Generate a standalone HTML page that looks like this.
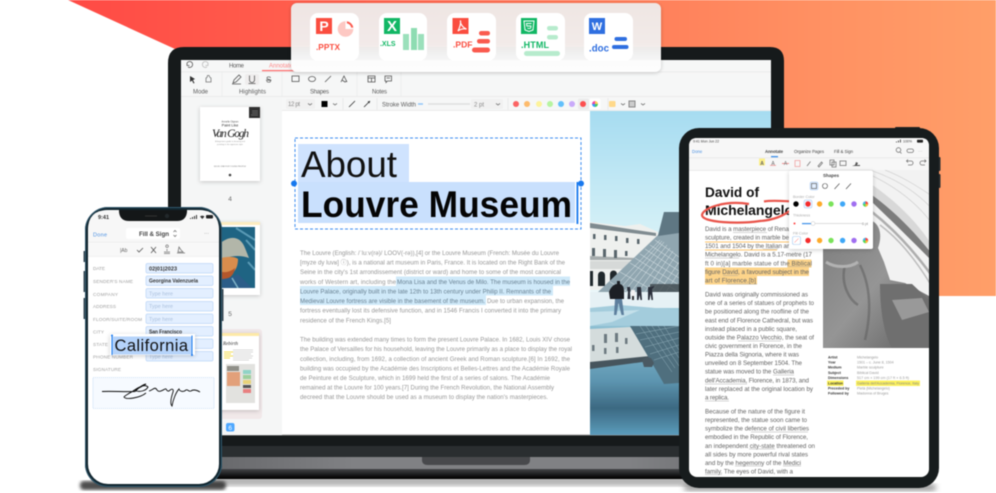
<!DOCTYPE html>
<html><head><meta charset="utf-8"><style>
html,body{margin:0;padding:0;background:#fff;width:996px;height:493px;overflow:hidden}
svg{display:block;filter:blur(.4px)}
text{font-family:"Liberation Sans","DejaVu Sans",sans-serif}
.b{font-size:6.1px;fill:#979797}
.bs{font-size:6.1px;fill:#6a8293}
.i{font-size:6.2px;fill:#646464}
.tb{font-size:6px;fill:#5c5c5c}
.l{font-size:5.6px;fill:#a0a0a0}
.t{font-size:3.6px;font-weight:bold;fill:#333}
.v{font-size:3.6px;fill:#999}
.ic{fill:none;stroke:#555;stroke-width:.8}
.ii{fill:none;stroke:#777;stroke-width:.8}
</style></head><body>
<svg width="996" height="493" viewBox="0 0 996 493" xmlns="http://www.w3.org/2000/svg">
<defs>
<linearGradient id="bg" x1="68" x2="996" y1="0" y2="0" gradientUnits="userSpaceOnUse"><stop offset="0" stop-color="#ff4a45"/><stop offset=".35" stop-color="#ff6650"/><stop offset=".8" stop-color="#ff9062"/><stop offset="1" stop-color="#ff9f69"/></linearGradient>
<linearGradient id="sky" x1="0" x2="0" y1="0" y2="1"><stop offset="0" stop-color="#a6dcf1"/><stop offset=".55" stop-color="#cfeef6"/><stop offset="1" stop-color="#eef9fb"/></linearGradient>
<linearGradient id="wat" x1="0" x2="0" y1="0" y2="1"><stop offset="0" stop-color="#a4cedd"/><stop offset=".3" stop-color="#7fb6cb"/><stop offset=".6" stop-color="#5d95b0"/><stop offset=".8" stop-color="#3c6982"/><stop offset="1" stop-color="#5b9cbb"/></linearGradient>
<linearGradient id="chin" x1="0" x2="1" y1="0" y2="0"><stop offset="0" stop-color="#5f6063"/><stop offset=".3" stop-color="#808184"/><stop offset=".75" stop-color="#808184"/><stop offset="1" stop-color="#646568"/></linearGradient>
<linearGradient id="chin2" x1="0" x2="0" y1="0" y2="1"><stop offset="0" stop-color="#444548"/><stop offset=".7" stop-color="#101112"/><stop offset="1" stop-color="#000"/></linearGradient>
<linearGradient id="pan" x1="0" x2="0" y1="0" y2="1"><stop offset="0" stop-color="#efeae8"/><stop offset=".6" stop-color="#f2efee"/><stop offset=".8" stop-color="#fcfcfc"/><stop offset="1" stop-color="#fff"/></linearGradient>
<linearGradient id="stat" x1="0" x2="1" y1="0" y2="1"><stop offset="0" stop-color="#7c7c7c"/><stop offset=".5" stop-color="#959595"/><stop offset="1" stop-color="#5f5f5f"/></linearGradient>
<filter id="bl"><feGaussianBlur stdDeviation="3"/></filter>
<filter id="bl2"><feGaussianBlur stdDeviation="1.5"/></filter>
<filter id="sh" x="-20%" y="-20%" width="140%" height="140%"><feDropShadow dx="0" dy="1" stdDeviation="2" flood-color="#000" flood-opacity=".2"/></filter>
<clipPath id="ph"><rect x="590" y="111" width="181" height="324"/></clipPath>
<clipPath id="stc"><rect x="823" y="170" width="106" height="178"/></clipPath>
<clipPath id="vg"><rect x="203" y="227" width="52" height="61"/></clipPath>
</defs>

<polygon points="68,0 996,0 996,296 600,296 175,49" fill="url(#bg)"/>

<!-- LAPTOP -->
<rect x="172" y="476" width="600" height="10" fill="#555" opacity=".45" filter="url(#bl)"/>
<path d="M184 47H770Q784 47 784 61V436H168V63Q168 47 184 47Z" fill="#161a1b"/>
<rect x="168" y="435" width="616" height="11" fill="#161a1b"/>
<rect x="168" y="446" width="616" height="11" fill="#2a2e30"/>
<rect x="168" y="457" width="616" height="12" fill="url(#chin)"/>
<rect x="168" y="469" width="616" height="10" fill="url(#chin2)"/>
<path d="M422 457H530V460Q530 465 524 465H428Q422 465 422 460Z" fill="#48494c"/>
<rect x="181" y="60" width="590" height="375" fill="#fff"/>
<rect x="181" y="434.500" width="590" height="1" fill="#999"/>
<rect x="181" y="60" width="590" height="51" fill="#f6f7f7"/>
<rect x="181" y="71.500" width="590" height=".8" fill="#e8e8e8"/>
<rect x="181" y="96" width="590" height="1" fill="#ebebeb"/>
<rect x="282" y="110" width="489" height=".8" fill="#eaeaea"/>
<rect x="181" y="97" width="101" height="338" fill="#f5f6f6"/>

<!-- tabs -->
<path d="M187 63a3 3 0 1 1 1 4M187 63v2.500h2.500" class="ic"/>
<path d="M208 63a3 3 0 1 0 -1 4M208 63v2.500h-2.500" fill="none" stroke="#bbb" stroke-width=".8"/>
<text x="229" y="67.500" class="tb" textLength="15">Home</text>
<text x="269" y="67.500" class="tb" style="fill:#f88" textLength="24">Annotate</text>
<rect x="262" y="70" width="38" height="1.200" fill="#ff6a6a"/>
<!-- ribbon -->
<g stroke="#ececec" stroke-width=".8"><path d="M222 72V96M282 72V96M357 72V96M401 72V96"/></g>
<path d="M190 76l5 3-2 1 1.500 3-1 .5-1.500-3-2 1.500z" fill="#333"/>
<path d="M206 82v-4l1-.5.500-2 1.500 0 1 2 1 .5v4z" class="ii"/>
<path d="M233 83l1-3 5-5 2 2-5 5zM232 84h9" class="ic"/>
<rect x="245" y="74" width="14" height="11" rx="2" fill="#efeded"/>
<path d="M249.500 75.500v4.500a2.500 2.500 0 0 0 5 0v-4.500M248.500 83.500h7" class="ic"/>
<text x="266" y="82.500" style="font-size:8px;fill:#555" text-decoration="line-through">S</text>
<rect x="292" y="76" width="7" height="5.500" class="ic"/>
<ellipse cx="312" cy="79" rx="3.500" ry="2.500" class="ic"/>
<path d="M325 82l6-6" class="ic"/>
<path d="M341 82l3-6 3 6M342 80l3 2 2-1" class="ic"/>
<path d="M368 76h7v6h-7zM368 78h7M371.500 78v4" class="ic"/>
<path d="M385 76h6.500v5h-4l-1.500 1.500v-1.500h-1zM386.500 78h3.500" class="ic"/>
<g class="tb"><text x="193" y="93.500" textLength="15">Mode</text><text x="239" y="93.500" textLength="27">Highlights</text><text x="310" y="93.500" textLength="19">Shapes</text><text x="372" y="93.500" textLength="15">Notes</text></g>
<!-- format bar -->
<rect x="286" y="99" width="29" height="10" rx="2" fill="#f1f1f1"/>
<text x="288" y="106" class="tb" style="fill:#888" textLength="12">12 pt</text>
<path d="M308 103.500l2 1.500 2-1.500" class="ii"/>
<rect x="321.500" y="101" width="6" height="6" fill="#000"/>
<path d="M333 103.500l2 1.500 2-1.500" class="ii"/>
<path d="M343 98V110M377 98V110M508 98V110M608 98V110" stroke="#e6e6e6" stroke-width=".8"/>
<path d="M349 107l6-6M364 107l6-6" stroke="#333" stroke-width=".8"/>
<path d="M370 101l-2.500.5 2 2z" fill="#333"/>
<text x="382" y="106.500" class="tb" textLength="34">Stroke Width</text>
<rect x="418" y="103.300" width="5" height="1.400" fill="#8cc4fa"/>
<rect x="428" y="103.300" width="42" height="1.400" fill="#ddd"/>
<rect x="471" y="99" width="32" height="10" rx="2" fill="#f1f1f1"/>
<text x="474" y="106.500" class="tb" style="fill:#888" textLength="10">2 pt</text>
<path d="M496 103.500l2 1.500 2-1.500" class="ii"/>
<rect x="578" y="98.500" width="11" height="11" rx="2" fill="#ececec"/>
<rect x="589.500" y="98.500" width="11" height="11" rx="2" fill="#fff"/>
<g><circle cx="516" cy="104" r="3" fill="#fb6464"/><circle cx="527" cy="104" r="3" fill="#fdbb6c"/><circle cx="539" cy="104" r="3" fill="#fdf39b"/><circle cx="550" cy="104" r="3" fill="#b7f4a0"/><circle cx="561" cy="104" r="3" fill="#62c0fb"/><circle cx="572" cy="104" r="3" fill="#c9aafa"/><circle cx="583" cy="104" r="3" fill="#fc5050"/>
<path d="M595 104V101A3 3 0 0 1 598 104Z" fill="#fc5"/><path d="M595 104H598A3 3 0 0 1 595 107Z" fill="#4c6"/><path d="M595 104V107A3 3 0 0 1 592 104Z" fill="#39f"/><path d="M595 104H592A3 3 0 0 1 595 101Z" fill="#e4a"/></g>
<rect x="609" y="101" width="6.500" height="6" rx="1" fill="#ffd98a"/>
<path d="M621 103.500l2 1.500 2-1.500M641 103.500l2 1.500 2-1.500" class="ii"/>
<rect x="629" y="101" width="6" height="6" fill="#ccc" stroke="#888" stroke-width="1"/>

<!-- thumbnails -->
<rect x="200" y="107" width="60" height="74" fill="#fff" filter="url(#sh)"/>
<rect x="249" y="107" width="11" height="11" fill="#2f2f2f"/>
<path d="M252 111h6M252 113h6M251 115h7" stroke="#999" stroke-width=".6"/>
<text x="230" y="122.500" style="font-size:2.500px;fill:#555" text-anchor="middle">Annelle Oignon</text>
<text x="230" y="126.500" style="font-size:3.800px;fill:#333" text-anchor="middle">Paint Like</text>
<text x="212" y="137" style="font-family:'Liberation Serif',serif;font-style:italic;font-size:11.500px;fill:#222" textLength="37">Van Gogh</text>
<text x="230" y="142" style="font-size:2px;fill:#999" text-anchor="middle">A beginners guide to drawing and</text>
<text x="230" y="145" style="font-size:2px;fill:#999" text-anchor="middle">painting in his signature style</text>
<text x="230" y="167" style="font-size:2px;fill:#777" text-anchor="middle">BOOK ONE FOR YOUNG PEOPLE</text>
<circle cx="230" cy="175" r="1.300" fill="#444"/>
<text x="230" y="201" style="font-size:6.500px;fill:#666" text-anchor="middle">4</text>

<rect x="198" y="222" width="62" height="73" fill="#fff" filter="url(#sh)"/>
<rect x="198" y="222" width="62" height="3" fill="#fdecc0"/>
<g clip-path="url(#vg)">
<rect x="203" y="227" width="52" height="61" fill="#1f6483"/>
<path d="M236 228L255 240M246 240L255 250M248 262L255 270" stroke="#5a9ab5" stroke-width="2"/>
<path d="M210 262C214 240 238 228 245 248L249 258C238 254 226 256 212 264Z" fill="#b2b6a9"/>
<path d="M216 260C224 256 235 256 238 259C238 270 232 276 222 277H216Z" fill="#d88d4d"/>
<path d="M216 270C224 274 230 272 235 268C234 276 228 281 216 281Z" fill="#b4572b"/>
<path d="M203 277C215 281 228 280 238 274L252 288H203Z" fill="#2c5d88"/>
<path d="M232 278L238 288" stroke="#7fb3c7" stroke-width="1.500"/>
</g>
<text x="230" y="316" style="font-size:6.500px;fill:#666" text-anchor="middle">5</text>

<rect x="196" y="329" width="66" height="90" rx="3" fill="#f1e8e9"/>
<rect x="198" y="333" width="61" height="77" fill="#fff" filter="url(#sh)"/>
<rect x="198" y="333" width="61" height="3" fill="#fde9a8"/>
<text x="223" y="345" style="font-family:'Liberation Serif',serif;font-style:italic;font-size:5px;fill:#333">Rebirth</text>
<path d="M224 352h9M224 354h7M224 356h9M224 358h6" stroke="#f2dd55" stroke-width="1"/>
<path d="M233 350h20M233 352h20M233 354h18M233 356h20M233 358h19M233 360h16" stroke="#ccc" stroke-width=".7"/>
<rect x="226" y="364" width="29" height="39" fill="#e2e2df"/>
<rect x="227" y="372" width="13" height="14" fill="#e2a07a"/>
<rect x="227" y="366" width="12" height="5" fill="#8f8f88"/>
<rect x="243" y="370" width="8" height="4" fill="#8fd3c6"/><rect x="243" y="375" width="8" height="4" fill="#9ccf9c"/><rect x="243" y="380" width="8" height="4" fill="#e8d37a"/><rect x="243" y="385" width="8" height="3" fill="#555"/><rect x="243" y="389" width="8" height="4" fill="#e88080"/>
<rect x="226" y="423" width="8.500" height="8.500" rx="2" fill="#4ea8ff"/>
<text x="230.200" y="430" style="font-size:6.500px;fill:#fff" text-anchor="middle">6</text>

<!-- doc title -->
<rect x="298" y="144" width="111" height="42" fill="#cfe3fe"/>
<rect x="298" y="182" width="277" height="41" fill="#c9e0fd"/>
<rect x="295" y="138" width="286" height="91" fill="none" stroke="#3d8df0" stroke-width="1" stroke-dasharray="3 2"/>
<text x="301" y="177" style="font-size:37px;fill:#111" textLength="96" lengthAdjust="spacingAndGlyphs">About</text>
<text x="301" y="217" style="font-size:37px;font-weight:bold;fill:#050505" textLength="271" lengthAdjust="spacingAndGlyphs">Louvre Museum</text>
<circle cx="294" cy="183.500" r="3" fill="#1778ee"/>
<circle cx="581" cy="183.500" r="3" fill="#1778ee"/>
<rect x="576.500" y="182" width="1.800" height="42" fill="#1778ee"/>

<!-- doc body -->
<path d="M396 276.500H570V285.800H553V295.500H486V305H300V286H396Z" fill="#cfe9f9"/>
<g class="b">
<text x="300" y="255" textLength="259">The Louvre (English: /ˈluːv(rə)/ LOOV(-rə)),[4] or the Louvre Museum (French: Musée du Louvre</text>
<text x="300" y="264.500" textLength="265">[myze dy luvʁ] ⓘ), is a national art museum in Paris, France. It is located on the Right Bank of the</text>
<text x="300" y="274.200" textLength="261">Seine in the city's 1st arrondissement (district or ward) and home to some of the most canonical</text>
<text x="300" y="283.800" textLength="96">works of Western art, including the</text>
<text x="487" y="303" textLength="77">Due to urban expansion, the</text>
<text x="300" y="312.700" textLength="261">fortress eventually lost its defensive function, and in 1546 Francis I converted it into the primary</text>
<text x="300" y="322.300" textLength="91">residence of the French Kings.[5]</text>
<text x="300" y="341.500" textLength="270">The building was extended many times to form the present Louvre Palace. In 1682, Louis XIV chose</text>
<text x="300" y="351.200" textLength="272">the Palace of Versailles for his household, leaving the Louvre primarily as a place to display the royal</text>
<text x="300" y="360.800" textLength="270">collection, including, from 1692, a collection of ancient Greek and Roman sculpture.[6] In 1692, the</text>
<text x="300" y="370.400" textLength="270">building was occupied by the Académie des Inscriptions et Belles-Lettres and the Académie Royale</text>
<text x="300" y="380" textLength="250">de Peinture et de Sculpture, which in 1699 held the first of a series of salons. The Académie</text>
<text x="300" y="389.600" textLength="254">remained at the Louvre for 100 years.[7] During the French Revolution, the National Assembly</text>
<text x="300" y="399.200" textLength="248">decreed that the Louvre should be used as a museum to display the nation's masterpieces.</text>
</g>
<g class="bs">
<text x="397" y="283.800" textLength="173">Mona Lisa and the Venus de Milo. The museum is housed in the</text>
<text x="300" y="293.400" textLength="251">Louvre Palace, originally built in the late 12th to 13th century under Philip II. Remnants of the</text>
<text x="300" y="303" textLength="185">Medieval Louvre fortress are visible in the basement of the museum.</text>
</g>

<!-- photo -->
<g clip-path="url(#ph)">
<rect x="590" y="111" width="181" height="190" fill="url(#sky)"/>
<rect x="590" y="300" width="181" height="135" fill="url(#wat)"/>
<!-- building -->
<path d="M590 222L625 226L640 224L658 232V240L625 290H590Z" fill="#eef0ee"/>
<path d="M590 223L656 233V236L590 228Z" fill="#7f8b90"/>
<path d="M590 256L636 258V260H590Z" fill="#a6acad"/>
<g fill="#59666c"><rect x="593" y="234" width="2.500" height="5"/><rect x="604" y="235" width="2.500" height="5"/><rect x="615" y="236" width="2.500" height="5"/><rect x="626" y="238" width="2.500" height="5"/><rect x="637" y="239" width="2.500" height="5"/>
<rect x="592" y="248" width="3" height="8"/><rect x="603" y="249" width="3" height="8"/><rect x="614" y="250" width="3" height="8"/><rect x="625" y="251" width="2.500" height="5"/></g>
<g fill="#20282c"><path d="M590 271h3v15h-3zM598 286v-11a3.500 3.500 0 0 1 7 0v11zM610 283v-9a3.500 3.500 0 0 1 7 0v5z"/></g>
<rect x="590" y="261" width="46" height="8" fill="#d6d9d8"/>
<!-- pyramid -->
<path d="M598 292L658 235L664 212H679V292Z" fill="#90a6b0"/>
<path d="M664 212H679V233L658 236Z" fill="#5f7783"/>
<g stroke="#dfe9ec" stroke-width=".5" fill="none"><path d="M610 292L660 240M617 292L662 241M624 292L664 242M631 292L667 245M638 292L670 248M645 292L673 251M652 292L676 255M659 292L679 262M666 292L679 272M630 263L679 292M635 258L679 285M640 254L679 278M645 249L679 271M650 245L679 264M655 240L679 257M620 272L656 292M610 282L628 292"/></g>
<rect x="650" y="284" width="29" height="8" fill="#3e484d" opacity=".8"/>
<!-- ground -->
<rect x="590" y="292" width="89" height="16" fill="#e6f1f5"/>
<path d="M590 308L620 305L679 310V326H590Z" fill="#a3ccdc"/>
<path d="M590 312L640 310L612 322L590 326Z" fill="#c4e0ea"/>
<!-- people -->
<path d="M609 292c2-6 6-8 8-8v-3h3v3c3 1 4 3 4 8v7h-14z" fill="#1c1f24"/>
<path d="M615 299h7l2 16h-2.500l-3-12-2 12h-2.500z" fill="#5d7f9d"/>
<path d="M627 287h3l.5 4h-3zM628 291h2l.5 8h-3zM637 287h4l1 13h-1.500l-1-5-1 5h-1.500zM648 287h3l3-1v1l-2 2 1 11h-1.500l-1-6-1 6h-1.500z" fill="#2a2f3a"/>
<path d="M631 290h4v6h-4z" fill="#f2f2f2"/>
<path d="M632 296h2v4h-2z" fill="#333"/>
<!-- reflection -->
<path d="M590 329L630 327L650 347V360L590 366Z" fill="#d4dcdc"/>
<path d="M590 362L650 356V361L590 369Z" fill="#46555d"/>
<g fill="#6d7a80"><rect x="592" y="345" width="2.500" height="6"/><rect x="604" y="334" width="3" height="9"/><rect x="615" y="333" width="3" height="9"/><rect x="625" y="338" width="2.500" height="6"/><rect x="604" y="348" width="2.500" height="6"/><rect x="616" y="347" width="2.500" height="6"/></g>
<path d="M630 326H679V383L664 384L656 370Z" fill="#4f6f7e"/>
<g stroke="#8dabb7" stroke-width=".5" fill="none"><path d="M640 326L672 372M646 326L675 368M652 326L679 366M658 326L679 358M664 326L679 350M636 334L679 326M640 340L679 332M645 347L679 338M650 354L679 345M654 360L679 352"/></g>
<path d="M642 360l4-3 5 1 3 5-2 4h-8z" fill="#4a5a63"/>
</g>

<!-- PANEL -->
<rect x="291" y="3" width="370" height="69" rx="6" fill="url(#pan)" opacity=".97" filter="url(#sh)"/>
<g fill="#fff"><rect x="310" y="13" width="49" height="48" rx="8"/><rect x="379" y="13" width="48" height="48" rx="8"/><rect x="447" y="13" width="49" height="48" rx="8"/><rect x="516" y="13" width="49" height="48" rx="8"/><rect x="584" y="13" width="49" height="48" rx="8"/></g>
<!-- pptx -->
<rect x="316" y="18" width="16" height="16" fill="#fa4d3f"/>
<text x="324" y="31" style="font-size:14px;font-weight:bold;fill:#fff" text-anchor="middle">P</text>
<circle cx="345.500" cy="29" r="7.800" fill="#fdc8c3"/>
<path d="M345.500 21.500a7.500 7.500 0 0 1 7.500 7.500h-7.500z" fill="#fff"/>
<path d="M347 21.200a8 8 0 0 1 6.300 6.300l-2 .2a6 6 0 0 0-4.500-4.500z" fill="#fb5a4e"/>
<text x="316" y="50" style="font-size:8.300px;font-weight:bold;fill:#fa4d3f" textLength="24">.PPTX</text>
<!-- xls -->
<rect x="384" y="18" width="16" height="16" fill="#12b765"/>
<text x="392" y="31" style="font-size:15px;font-weight:bold;fill:#fff" text-anchor="middle">X</text>
<text x="380" y="46" style="font-size:7px;font-weight:bold;fill:#12b765" textLength="15.500">.XLS</text>
<rect x="403" y="34" width="6" height="16" fill="#9be0bb"/><rect x="411" y="28" width="6" height="22" fill="#8edcb2"/><rect x="418" y="34" width="6" height="16" fill="#9be0bb"/>
<!-- pdf -->
<rect x="452.500" y="18" width="16" height="16" fill="#fa4d3f"/>
<path d="M460.500 20.500c-.5 3 2 7 6 8.500-3-.5-6 0-8.500 2 1.500-3 3-7 2.500-10.500z" fill="none" stroke="#fff" stroke-width="1.200"/>
<text x="453" y="47.500" style="font-size:8.500px;font-weight:bold;fill:#fa4d3f" textLength="19.500">.PDF</text>
<rect x="479" y="31" width="11" height="4.500" rx="2.200" fill="#fa5a4e"/><rect x="477" y="39" width="13" height="4.500" rx="2.200" fill="#fa5a4e"/><rect x="472" y="47.500" width="18" height="5" rx="2.500" fill="#fa5a4e"/>
<!-- html -->
<rect x="521" y="18" width="16" height="16" fill="#12b765"/>
<path d="M524 21h10l-1 9-4 1.500-4-1.500z" fill="none" stroke="#fff" stroke-width="1"/>
<path d="M531.500 23.500h-5l.3 2.500h4.200l-.3 2-1.700.5-1.700-.5" fill="none" stroke="#fff" stroke-width=".9"/>
<text x="521" y="48" style="font-size:9px;font-weight:bold;fill:#12b765" textLength="28">.HTML</text>
<rect x="547" y="26" width="11" height="4.500" rx="2.200" fill="#b7ebcd"/><rect x="547" y="35" width="11" height="4.500" rx="2.200" fill="#b7ebcd"/><rect x="524" y="51" width="36" height="5" rx="2.500" fill="#b7ebcd"/>
<!-- word -->
<rect x="589" y="18" width="16" height="16" fill="#2f6fe0"/>
<text x="597" y="30" style="font-size:11px;font-weight:bold;fill:#fff" text-anchor="middle">W</text>
<text x="589" y="51.500" style="font-size:9.700px;font-weight:bold;fill:#2f6fe0" textLength="20">.doc</text>
<rect x="614.500" y="37" width="12.500" height="4" rx="2" fill="#2f6fe0"/><rect x="612" y="45" width="16.500" height="4" rx="2" fill="#2f6fe0"/>

<!-- PHONE -->
<rect x="80" y="481" width="146" height="9" rx="4" fill="#222" opacity=".8" filter="url(#bl2)"/>
<rect x="83.500" y="251" width="2" height="11" fill="#3a4a55"/><rect x="83.500" y="271" width="2" height="21" fill="#3a4a55"/><rect x="83.500" y="298" width="2" height="21" fill="#3a4a55"/>
<rect x="221.500" y="289" width="2" height="32" fill="#3a4a55"/>
<rect x="85" y="207" width="137" height="280" rx="23" fill="#12262f"/>
<rect x="85.500" y="207.500" width="136" height="279" rx="22.500" fill="none" stroke="#2e566b" stroke-width="1"/>
<rect x="88" y="210" width="131" height="274" rx="20" fill="#fff"/>
<path d="M88 242V230Q88 210 108 210H199Q219 210 219 230V242Z" fill="#f7f7f7"/>
<path d="M119 210H187V212Q186 221 177 221H129Q120 221 119 212Z" fill="#141718"/>
<rect x="145" y="215.500" width="12" height="1" fill="#333"/><circle cx="167" cy="216" r="2.200" fill="#22282b"/>
<text x="98" y="219" style="font-size:5.500px;font-weight:bold;fill:#333">9:41</text>
<path d="M190 219h1v-1h-1zM192 219h1v-2h-1zM194 219h1v-3h-1zM196 219h1v-4h-1z" fill="#333"/>
<path d="M200 216.500a3.500 3.500 0 0 1 4.500 0l-2.200 2.500z" fill="#333"/>
<rect x="206" y="215" width="7" height="3.500" rx="1" fill="#222"/>
<text x="93" y="236.500" style="font-size:5.500px;fill:#4a90e2" textLength="14">Done</text>
<rect x="126" y="228" width="54" height="11" rx="2" fill="#fff"/>
<text x="139" y="236" style="font-size:6.200px;font-weight:bold;fill:#444" textLength="30">Fill &amp; Sign</text>
<path d="M173.500 232l1.500-1.500 1.500 1.500M173.500 235l1.500 1.500 1.500-1.500" class="ii"/>
<text x="204" y="235" style="font-size:5px;fill:#888">···</text>
<rect x="88" y="242" width="131" height="14" fill="#f8f8f8"/>
<rect x="88" y="241.800" width="131" height=".7" fill="#ececec"/><rect x="88" y="256" width="131" height=".7" fill="#ececec"/>
<text x="120" y="252" style="font-size:5px;fill:#666">|Ab</text>
<path d="M137 250l2 2 4-4M151 247l5 6M156 247l-5 6" stroke="#555" stroke-width=".8" fill="none"/>
<path d="M167 247.500a1.300 1.300 0 1 1 .1 0zM167 249v2M164 252h6M164 253.500h6" class="ii"/>
<path d="M179 247l2 3 2 2h-5zM177 253h8" class="ii"/>
<g>
<text class="l" x="93" y="270" textLength="12" style="font-size:4.700px">DATE</text>
<text class="l" x="93" y="283" textLength="40" style="font-size:4.700px">SENDER'S NAME</text>
<text class="l" x="93" y="296" textLength="25" style="font-size:4.700px">COMPANY</text>
<text class="l" x="93" y="308" textLength="23" style="font-size:4.700px">ADDRESS</text>
<text class="l" x="93" y="321" textLength="49" style="font-size:4.700px">FLOOR/SUITE/ROOM</text>
<text class="l" x="93" y="333.500" textLength="11" style="font-size:4.700px">CITY</text>
<text class="l" x="93" y="346" textLength="15" style="font-size:4.700px">STATE</text>
<text class="l" x="93" y="358.500" textLength="40" style="font-size:4.700px">PHONE NUMBER</text>
<text class="l" x="93" y="371" textLength="28" style="font-size:4.700px">SIGNATURE</text>
</g>
<g fill="#e3efff" stroke="#bcd6f8" stroke-width=".7">
<rect x="146" y="263.500" width="67" height="9.500" rx="1.500"/><rect x="146" y="276" width="67" height="9.500" rx="1.500"/><rect x="146" y="288.500" width="67" height="9.500" rx="1.500"/><rect x="146" y="301.500" width="67" height="9.500" rx="1.500"/><rect x="146" y="314" width="67" height="9.500" rx="1.500"/><rect x="146" y="326.500" width="67" height="9.500" rx="1.500"/><rect x="146" y="339" width="67" height="9.500" rx="1.500"/><rect x="146" y="351.500" width="67" height="9.500" rx="1.500"/>
</g>
<text x="149" y="270.500" style="font-size:5.500px;font-weight:bold;fill:#333" textLength="28">02|01|2023</text>
<text x="149" y="282.500" style="font-size:5px;font-weight:bold;fill:#333" textLength="49">Georgina Valenzuela</text>
<text x="149" y="295.500" style="fill:#a9bfdc;font-size:5.300px" textLength="24">Type here</text>
<text x="149" y="308" style="fill:#a9bfdc;font-size:5.300px" textLength="24">Type here</text>
<text x="149" y="321" style="fill:#a9bfdc;font-size:5.300px" textLength="24">Type here</text>
<text x="149" y="358.500" style="fill:#a9bfdc;font-size:5.300px" textLength="24">Type here</text>
<text x="149" y="333.500" style="font-size:5px;font-weight:bold;fill:#333" textLength="33">San Francisco</text>
<rect x="93" y="377.500" width="121" height="31" fill="#f6faff" stroke="#a5c8f0" stroke-width=".6" stroke-dasharray="1 1"/>
<path d="M102 391.500C112 391 125 392 135 391.500C138 389 141 385 146 384C140 388 126 394 124 397C126 400 140 398 146 393M133 391C140 386 145 384 148 387C146 391 140 392 136 391M149 391C153 390 155 386 157 390C159 393 163 390 165 389C167 388 166 392 169 391C172 388 174 389 173 392C171 398 170 404 172 406C173 400 176 392 179 389C180 392 184 392 186 390C188 389 188 392 191 391C192 390 195 389 200 392" fill="none" stroke="#0c0c0c" stroke-width=".9"/>
<!-- california -->
<rect x="110" y="334" width="85" height="21" fill="#fff" filter="url(#sh)"/>
<rect x="112" y="336.500" width="80" height="18" fill="#b5d3fa"/>
<rect x="111.500" y="335.500" width="1" height="19.500" fill="#1778ee"/><rect x="191.500" y="335.500" width="1" height="19.500" fill="#1778ee"/>
<circle cx="112" cy="335.500" r="1" fill="#1778ee"/><circle cx="192" cy="355" r="1" fill="#1778ee"/>
<text x="114.500" y="351" style="font-size:16.500px;fill:#111" textLength="73.500">California</text>

<!-- IPAD -->
<rect x="684" y="484" width="252" height="7" rx="3" fill="#555" opacity=".6" filter="url(#bl)"/>
<rect x="895" y="127" width="25" height="3" rx="1" fill="#1d2224"/>
<rect x="937" y="157" width="3.500" height="14" rx="1" fill="#2a2f31"/><rect x="937" y="174" width="3.500" height="14" rx="1" fill="#2a2f31"/>
<rect x="679" y="128" width="260" height="360" rx="20" fill="#171c1d"/>
<rect x="689" y="138" width="240" height="339" rx="8" fill="#fff"/>
<path d="M689 170V146Q689 138 697 138H921Q929 138 929 146V170Z" fill="#f7f7f7"/>
<rect x="689" y="157.500" width="240" height=".7" fill="#e5e5e5"/><rect x="689" y="170" width="240" height=".7" fill="#e5e5e5"/>
<text x="693" y="142.500" style="font-size:3.500px;fill:#444">9:41  Mon Jun 22</text>
<text x="903" y="142.500" style="font-size:3.500px;fill:#444">100%</text>
<path d="M896 142.500h.8v-1h-.8zM898 142.500h.8v-2h-.8zM900 142.500h.8v-3h-.8z" fill="#333"/>
<rect x="917" y="139.800" width="6" height="2.800" rx=".7" fill="#222"/>
<text x="692" y="153" style="font-size:4.300px;fill:#4a90e2">Done</text>
<text x="765" y="153" style="font-size:4.300px;font-weight:bold;fill:#444" textLength="18">Annotate</text>
<text x="794" y="153" style="font-size:4.300px;fill:#444" textLength="30">Organize Pages</text>
<text x="834" y="153" style="font-size:4.300px;fill:#444" textLength="19">Fill &amp; Sign</text>
<rect x="771" y="156" width="7" height="1.300" fill="#3b8ee8"/>
<circle cx="898.500" cy="150" r="2.300" class="ii"/><path d="M900 152l1.500 1.500" class="ii"/>
<rect x="907" y="149" width="6.500" height="3.500" rx="1.700" class="ii"/>
<text x="918" y="152.500" style="font-size:4.500px;fill:#aaa">···</text>
<!-- toolbar -->
<rect x="759" y="158.500" width="6" height="7" fill="#fdf08b"/>
<text x="762" y="165" style="font-size:5px;font-weight:bold;fill:#666" text-anchor="middle">A</text>
<text x="773" y="165" style="font-size:5px;fill:#666" text-anchor="middle">A</text>
<rect x="770" y="165" width="6" height=".7" fill="#e88"/>
<path d="M782 163.500h7" stroke="#e66" stroke-width=".7"/><text x="785.500" y="165" style="font-size:5px;fill:#777" text-anchor="middle">A</text>
<rect x="795" y="160.500" width="5" height="6" fill="none" stroke="#e88" stroke-width=".6"/>
<path d="M807 166l3.500-4.500M818 166l3.500-4 1 1-3.500 4zM830 160h4v5h-4zM832 162h4v5h-4z" class="ii"/>
<rect x="840" y="161" width="6" height="4.500" class="ii"/>
<path d="M852 166l3-1 1-3 2 1-1 2h3v1z" fill="#555"/>
<path d="M908 165h3a2 2 0 0 0 0-4h-4M908 159.500l-1.500 1.500 1.500 1.500M925 165h-3a2 2 0 0 1 0-4h4M924.500 159.500l1.500 1.500-1.500 1.500" class="ii"/>

<!-- statue image -->
<g clip-path="url(#stc)">
<rect x="823" y="170" width="106" height="178" fill="#f2f2f2"/>
<g fill="none" stroke="#d0d0d0" stroke-width=".7"><path d="M860 170C895 185 920 205 935 228M870 170C900 180 920 195 935 212M885 170C905 178 920 188 935 198"/></g>
<path d="M868 182C895 200 918 222 935 250V258C915 236 890 212 868 194Z" fill="#d8d8d8"/>
<path d="M872 195C895 212 915 232 935 258V264C915 244 893 222 872 202Z" fill="#7c7c7c"/>
<path d="M872 212C895 230 915 252 935 280" stroke="#aeaeae" stroke-width="2.500" fill="none"/>
<path d="M880 225C900 240 918 262 935 292" stroke="#bdbdbd" stroke-width="1.500" fill="none"/>
<rect x="823" y="170" width="50" height="80" fill="#dcdcdc"/>
<path d="M823 248C835 240 850 235 857 228C857 220 868 218 874 222C882 228 881 240 878 248L884 262L890 280L905 283L929 296V348H823Z" fill="url(#stat)"/>
<path d="M880 284L912 284L929 300V348H892C884 335 880 310 880 284Z" fill="#6f6f6f"/>
<path d="M892 300L922 298L929 312L902 320Z" fill="#999"/>
<path d="M860 265C870 285 872 310 865 340M845 265C840 285 850 300 858 305" stroke="#5e5e5e" stroke-width="2.500" fill="none" opacity=".55"/>
<path d="M826 262C835 268 850 268 858 262" stroke="#b2b2b2" stroke-width="3" fill="none"/>
</g>

<!-- david text -->
<rect x="787.500" y="259.500" width="24" height="8" fill="#fdd48a"/>
<rect x="705" y="267.500" width="104" height="8.500" fill="#fdd48a"/>
<rect x="705" y="276" width="52" height="8.500" fill="#fdd48a"/>
<rect x="705" y="241.500" width="84" height="1" fill="#fdc56d"/>
<rect x="705" y="249.500" width="72" height="1" fill="#fdc56d"/>
<text x="705" y="197" style="font-size:13.700px;font-weight:bold;fill:#111" textLength="54">David of</text>
<text x="705" y="215" style="font-size:14px;font-weight:bold;fill:#111" textLength="88">Michelangelo</text>
<path d="M749 204C725 200 703 208 702 215C702 223 740 224 760 221C775 220 785 215 792 209" fill="none" stroke="#e9544a" stroke-width="2.200"/>
<path d="M764 201.500C772 200 782 201 792 201.500" fill="none" stroke="#e9544a" stroke-width="2.200"/>
<g class="i">
<text x="705" y="231" textLength="84">David is a masterpiece of Rena</text>
<text x="705" y="239.500" textLength="84">sculpture, created in marble be</text>
<text x="705" y="248" textLength="84">1501 and 1504 by the Italian ar</text>
<text x="705" y="256.700" textLength="107">Michelangelo. David is a 5.17-metre (17</text>
<text x="705" y="265.300" textLength="107">ft 0 in)[a] marble statue of the Biblical</text>
<text x="705" y="274" textLength="104">figure David, a favoured subject in the</text>
<text x="705" y="282.500" textLength="51">art of Florence.[b]</text>
<text x="705" y="296.500" textLength="103">David was originally commissioned as</text>
<text x="705" y="305.200" textLength="109">one of a series of statues of prophets to</text>
<text x="705" y="313.700" textLength="104">be positioned along the roofline of the</text>
<text x="705" y="322.300" textLength="108">east end of Florence Cathedral, but was</text>
<text x="705" y="330.900" textLength="92">instead placed in a public square,</text>
<text x="705" y="339.400" textLength="109">outside the Palazzo Vecchio, the seat of</text>
<text x="705" y="348" textLength="97">civic government in Florence, in the</text>
<text x="705" y="356.600" textLength="94">Piazza della Signoria, where it was</text>
<text x="705" y="365.200" textLength="97">unveiled on 8 September 1504. The</text>
<text x="705" y="373.700" textLength="89">statue was moved to the Galleria</text>
<text x="705" y="382.300" textLength="104">dell'Accademia, Florence, in 1873, and</text>
<text x="705" y="390.900" textLength="108">later replaced at the original location by</text>
<text x="705" y="399.500" textLength="24">a replica.</text>
<text x="705" y="413.500" textLength="100">Because of the nature of the figure it</text>
<text x="705" y="422" textLength="102">represented, the statue soon came to</text>
<text x="705" y="430.600" textLength="104">symbolize the defence of civil liberties</text>
<text x="705" y="439.200" textLength="103">embodied in the Republic of Florence,</text>
<text x="705" y="447.800" textLength="110">an independent city-state threatened on</text>
<text x="705" y="456.300" textLength="103">all sides by more powerful rival states</text>
<text x="705" y="464.900" textLength="96">and by the hegemony of the Medici</text>
<text x="705" y="473.500" textLength="88">family. The eyes of David, with a</text>
</g>
<g stroke="#999" stroke-width=".4"><path d="M733 232.500H767M763 249H778M705 258H739M787 266.500H811M723 275.500H738M727 284H757M738 341H781M773 375H794M705 384H747M751 432H808M749 449H775M735 466H763M783 466H801M705 474.500H722M705 401H729"/></g>

<!-- table -->
<rect x="827" y="380.500" width="16.500" height="5.500" fill="#fdf25e"/>
<rect x="856" y="380.500" width="64" height="5.500" fill="#fdf25e"/>
<g class="t"><text x="828" y="358.500">Artist</text><text x="828" y="363.500">Year</text><text x="828" y="368.500">Medium</text><text x="828" y="373.800">Subject</text><text x="828" y="378.800">Dimensions</text><text x="828" y="384.300">Location</text><text x="828" y="389.300">Preceded by</text><text x="828" y="394.500">Followed by</text></g>
<g class="v"><text x="857" y="358.500">Michelangelo</text><text x="857" y="363.500">1501 – c. June 8, 1504</text><text x="857" y="368.500">Marble sculpture</text><text x="857" y="373.800">Biblical David</text><text x="857" y="378.800" textLength="52">517 cm × 199 cm (17 ft × 6.5 ft)</text><text x="857" y="384.300" textLength="62" style="fill:#888">Galleria dell'Accademia, Florence, Italy</text><text x="857" y="389.300">Pietà (Michelangelo)</text><text x="857" y="394.500">Madonna of Bruges</text></g>

<!-- popover -->
<rect x="789" y="170.500" width="84" height="78.500" rx="2" fill="#fff" filter="url(#sh)"/>
<text x="831" y="177" style="font-size:4.500px;font-weight:bold;fill:#444" text-anchor="middle">Shapes</text>
<rect x="810" y="182" width="8" height="8" rx="1.500" fill="#e3efff" stroke="#a5c8f0" stroke-width=".5"/>
<rect x="811.500" y="183.500" width="5" height="5" fill="none" stroke="#444" stroke-width=".6"/>
<circle cx="825" cy="186" r="2.500" fill="none" stroke="#444" stroke-width=".6"/>
<path d="M834.500 189l5-5.500M846 189l5-5.500" stroke="#444" stroke-width=".6"/>
<text x="793" y="198" style="font-size:3.800px;fill:#aaa">Border Color</text>
<text x="793" y="216.500" style="font-size:3.800px;fill:#aaa">Thickness</text>
<text x="793" y="234.500" style="font-size:3.800px;fill:#aaa">Fill Color</text>
<rect x="804" y="200" width="8" height="8" rx="1.500" fill="#e9f2ff" stroke="#a5c8f0" stroke-width=".5"/>
<g><circle cx="796" cy="204" r="2.700" fill="#000"/><circle cx="808" cy="204" r="2.700" fill="#f52b2b"/><circle cx="819.600" cy="204" r="2.700" fill="#fdaa2a"/><circle cx="831" cy="204" r="2.700" fill="#7ae35a"/><circle cx="842.600" cy="204" r="2.700" fill="#3ea7f7"/><circle cx="854" cy="204" r="2.700" fill="#a06ef0"/>
<circle cx="865.500" cy="204" r="2.700" fill="#4ab6e8"/><path d="M865.500 204V201.300A2.700 2.700 0 0 1 868.200 204Z" fill="#f44"/><path d="M865.500 204H868.200A2.700 2.700 0 0 1 865.500 206.700Z" fill="#fb3"/><path d="M865.500 204V206.700A2.700 2.700 0 0 1 862.800 204Z" fill="#5d5"/></g>
<circle cx="794.500" cy="223.500" r="1" fill="#f44"/>
<rect x="802" y="223" width="11" height="1.200" fill="#3b8ee8"/><rect x="813" y="223" width="49" height="1" fill="#ddd"/>
<circle cx="813" cy="223.500" r="2" fill="#fff" stroke="#ccc" stroke-width=".5"/>
<text x="862" y="225" style="font-size:3.600px;fill:#888">6 pt</text>
<rect x="792.500" y="236.500" width="8" height="8" rx="1.500" fill="#fff" stroke="#a5c8f0" stroke-width=".6"/>
<path d="M794.500 242.500l4-4" stroke="#f66" stroke-width=".5"/>
<g><circle cx="808" cy="240.500" r="2.700" fill="#f52b2b"/><circle cx="819.600" cy="240.500" r="2.700" fill="#fdaa2a"/><circle cx="831" cy="240.500" r="2.700" fill="#7ae35a"/><circle cx="842.600" cy="240.500" r="2.700" fill="#3ea7f7"/><circle cx="854" cy="240.500" r="2.700" fill="#a06ef0"/>
<circle cx="865.500" cy="240.500" r="2.700" fill="#4ab6e8"/><path d="M865.500 240.500V237.800A2.700 2.700 0 0 1 868.200 240.500Z" fill="#f44"/><path d="M865.500 240.500H868.200A2.700 2.700 0 0 1 865.500 243.200Z" fill="#fb3"/><path d="M865.500 240.500V243.200A2.700 2.700 0 0 1 862.800 240.500Z" fill="#5d5"/></g>
</svg>
</body></html>
